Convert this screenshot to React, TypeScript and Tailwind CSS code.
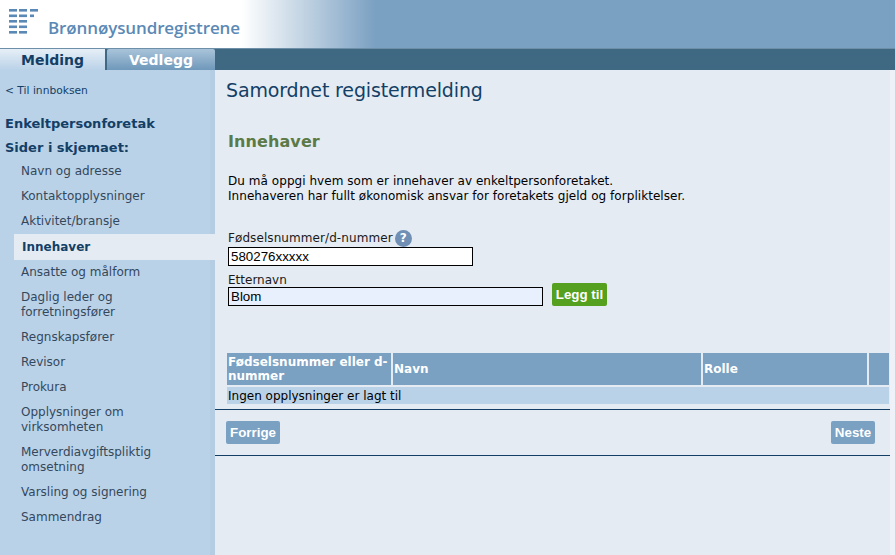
const menu = [
  { label: "Navn og adresse", h: "h-[25px]" },
  { label: "Kontaktopplysninger", h: "h-[25px]" },
  { label: "Aktivitet/bransje", h: "h-[25px]" },
  { label: "Innehaver", h: "h-[26px]", active: true },
  { label: "Ansatte og målform", h: "h-[25px]" },
  { label: "Daglig leder og forretningsfører", h: "h-[40px]" },
  { label: "Regnskapsfører", h: "h-[25px]" },
  { label: "Revisor", h: "h-[25px]" },
  { label: "Prokura", h: "h-[25px]" },
  { label: "Opplysninger om virksomheten", h: "h-[40px]" },
  { label: "Merverdiavgiftspliktig omsetning", h: "h-[40px]" },
  { label: "Varsling og signering", h: "h-[25px]" },
  { label: "Sammendrag", h: "h-[25px]" },
];

function Logo() {
  const rows = [0, 5.5, 11, 16.5, 22];
  return (
    <svg width="30" height="25" viewBox="0 0 30 25" className="mt-[9px] ml-[9px] shrink-0" fill="#5b89b5">
      {rows.map((y, i) => (
        <g key={y}>
          <rect x="0" y={y} width="8" height="2.6" />
          <rect x="10" y={y} width="8" height="2.6" />
          {i === 0 && <rect x="21" y={y} width="8" height="2.6" />}
          {i === 1 && <rect x="21" y={y} width="4" height="2.6" />}
        </g>
      ))}
    </svg>
  );
}

export default function App() {
  return (
    <div className="flex h-[555px] w-[895px] flex-col overflow-hidden bg-[#e4ebf3] font-['DejaVu_Sans',Verdana,sans-serif] text-[12px] text-[#1c2b3a]">
      <header className="flex h-[48px] bg-[linear-gradient(90deg,#ffffff_0%,#ffffff_27%,#7aa0c2_42%,#7aa0c2_100%)]">
        <Logo />
        <span className="mt-[18px] ml-[9px] font-['Open_Sans',sans-serif] text-[17px] leading-[20px] font-semibold tracking-[-0.12px] text-[#5b89b5]">
          Brønnøysundregistrene
        </span>
      </header>

      <div className="flex h-[22px] items-end border-t border-[#6d8fa8] bg-[#3f6883]">
        <div className="flex h-[21px] w-[105px] items-center justify-center bg-[linear-gradient(180deg,#e6eff7,#bad2e8)] pt-[2px] text-[14px] font-bold text-[#133f66]">
          Melding
        </div>
        <div className="ml-[2px] flex h-[21px] w-[108px] items-center justify-center rounded-t-[2px] bg-[linear-gradient(180deg,#a9c4da,#6f98ba)] pt-[2px] text-[14px] font-bold text-white">
          Vedlegg
        </div>
      </div>

      <div className="flex min-h-0 flex-1">
        <aside className="w-[215px] shrink-0 bg-[linear-gradient(90deg,#bad2e8_210px,#b5cde3_210px)]">
          <p className="mt-[14px] ml-[5px] text-[10.7px] leading-[14px] text-[#133f66]">&lt; Til innboksen</p>
          <h2 className="mt-[18px] ml-[5px] text-[13px] leading-[16px] font-bold text-[#133f66]">Enkeltpersonforetak</h2>
          <h2 className="mt-[8px] ml-[5px] text-[13px] leading-[16px] font-bold text-[#133f66]">Sider i skjemaet:</h2>
          <ul className="mt-[3px]">
            {menu.map((item) => (
              <li
                key={item.label}
                className={
                  item.active
                    ? `ml-[14px] flex ${item.h} items-center bg-[#e4ebf3] pl-[8px] font-bold text-[#133f66]`
                    : `flex ${item.h} items-center pr-[60px] pl-[21px] leading-[15px] text-[#34485c]`
                }
              >
                {item.label}
              </li>
            ))}
          </ul>
        </aside>

        <main className="min-w-0 flex-1 bg-[#eef2f8]">
          <div className="mr-[5px] h-full bg-[#e4ebf3] pt-[8px]">
            <h1 className="ml-[11px] text-[19px] leading-[24px] tracking-[-0.15px] text-[#133f66]">Samordnet registermelding</h1>
            <h2 className="mt-[30px] ml-[13px] text-[16px] leading-[20px] font-bold tracking-[0.1px] text-[#5c7a45]">Innehaver</h2>
            <p className="mt-[22px] ml-[13px] leading-[15px] tracking-[0.05px] text-black">
              Du må oppgi hvem som er innehaver av enkeltpersonforetaket.
              <br />
              Innehaveren har fullt økonomisk ansvar for foretakets gjeld og forpliktelser.
            </p>

            <div className="mt-[26px] ml-[13px]">
              <div className="flex h-[17px] items-center leading-[15px] tracking-[0.08px] text-[#1a1a1a]">
                Fødselsnummer/d-nummer
                <span className="ml-[2px] flex h-[17px] w-[17px] items-center justify-center rounded-full bg-[#6f8fb5] text-[12px] font-bold text-white">
                  ?
                </span>
              </div>
              <div className="flex h-[19px] w-[245px] items-center border border-black bg-white pl-[2px] font-['Liberation_Sans',Arial,sans-serif] text-[13.33px] text-black">
                580276xxxxx
              </div>
              <div className="mt-[7px] h-[14px] leading-[15px] text-[#1a1a1a]">Etternavn</div>
              <div className="flex h-[19px] items-end">
                <div className="flex h-[19px] w-[315px] shrink-0 items-center border border-black bg-[#e8f0fe] pl-[2px] font-['Liberation_Sans',Arial,sans-serif] text-[13.33px] text-black">
                  Blom
                </div>
                <button className="ml-[9px] flex h-[23px] w-[55px] shrink-0 items-center justify-center rounded-[2px] bg-[#55a01f] font-['Liberation_Sans',Arial,sans-serif] text-[13.33px] font-bold text-white">
                  Legg til
                </button>
              </div>
            </div>

            <div className="mt-[47px] ml-[12px] w-[662px]">
              <div className="flex h-[32px] gap-[2px] font-bold text-white">
                <div className="flex w-[164px] items-center bg-[#7aa0c2] pl-[1px] leading-[14px]">Fødselsnummer eller d-nummer</div>
                <div className="flex w-[308px] items-center bg-[#7aa0c2] pl-[1px]">Navn</div>
                <div className="flex w-[164px] items-center bg-[#7aa0c2] pl-[1px]">Rolle</div>
                <div className="flex-1 bg-[#7aa0c2]" />
              </div>
              <div className="mt-[2px] flex h-[17px] items-center bg-[#bad2e8] pl-[1px] text-black">
                Ingen opplysninger er lagt til
              </div>
            </div>

            <div className="mt-[5px] flex h-[47px] items-center justify-between border-y border-[#133f66] pr-[15px] pl-[11px]">
              <button className="h-[23px] w-[54px] rounded-[2px] bg-[#7aa0c2] font-['Liberation_Sans',Arial,sans-serif] text-[13.33px] font-bold text-white">Forrige</button>
              <button className="h-[23px] w-[44px] rounded-[2px] bg-[#7aa0c2] font-['Liberation_Sans',Arial,sans-serif] text-[13.33px] font-bold text-white">Neste</button>
            </div>
          </div>
        </main>
      </div>
    </div>
  );
}
